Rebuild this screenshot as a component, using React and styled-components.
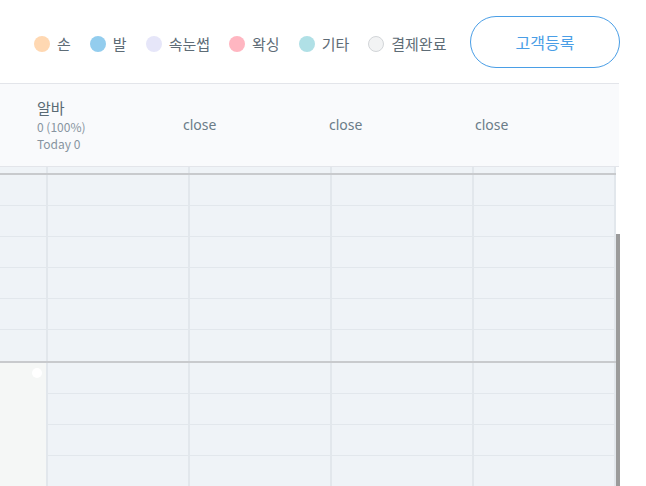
import React from "react";
import styled, { createGlobalStyle } from "styled-components";

const Global = createGlobalStyle`
  html, body { margin: 0; padding: 0; background: #fff; }
  body {
    width: 646px; height: 486px; overflow: hidden;
    font-family: "Noto Sans CJK KR", "Noto Sans", sans-serif;
  }
  * { box-sizing: border-box; }
`;

const Page = styled.div`
  width: 646px;
  height: 486px;
  overflow: hidden;
  display: flex;
  flex-direction: column;
`;

const TopBar = styled.div`
  height: 83px;
  flex: none;
  display: flex;
  align-items: center;
  padding: 0 26px 0 34px;
`;

const Legend = styled.div`
  display: flex;
  align-items: center;
  gap: 19px;
  margin-top: 5px;
`;

const LegendItem = styled.div`
  display: flex;
  align-items: center;
  gap: 7px;
  font-size: 15px;
  color: #5e6c76;
  line-height: 16px;
`;

const Dot = styled.span`
  width: 16px;
  height: 16px;
  border-radius: 50%;
  background: ${(p) => p.$color};
  border: ${(p) => (p.$outline ? "1px solid #d2d5d8" : "none")};
  flex: none;
`;

const RegisterButton = styled.button`
  margin-left: auto;
  width: 150px;
  height: 52px;
  border-radius: 26px;
  border: 1px solid #4a9ee6;
  background: #fff;
  color: #4a9ee6;
  font-family: "Noto Sans CJK KR", sans-serif;
  font-size: 16px;
  cursor: pointer;
`;

const Header = styled.div`
  width: 619px;
  height: 84px;
  flex: none;
  background: #f9fafc;
  border-top: 1px solid #e3e5ea;
  border-bottom: 1px solid #e3e5ea;
  display: grid;
  grid-template-columns: repeat(4, 146px);
  align-items: center;
  padding-left: 37px;
`;

const StaffCell = styled.div`
  display: flex;
  flex-direction: column;
  margin-top: -2px;
`;

const StaffName = styled.div`
  font-size: 15px;
  color: #5a6a74;
  line-height: 21px;
`;

const StaffSub = styled.div`
  font-size: 12px;
  color: #8794a0;
  line-height: 17px;
`;

const Closed = styled.div`
  font-size: 14px;
  color: #6b7c88;
  font-family: "Noto Sans", sans-serif;
  margin-top: -2px;
`;

const Body = styled.div`
  display: flex;
  flex: 1;
  min-height: 0;
`;

const Grid = styled.div`
  width: 616px;
  display: flex;
  flex-direction: column;
`;

const Spacer = styled.div`
  display: grid;
  grid-template-columns: 48px repeat(4, 142px);
  height: 6px;
  flex: none;
`;

const Block = styled.div`
  display: grid;
  grid-template-columns: 48px repeat(4, 142px);
  grid-auto-rows: 31px;
  border-top: 2px solid #c8cacd;
  flex: none;
`;

const Cell = styled.div`
  background: #eff3f7;
  border-right: 2px solid #e2e7ec;
  border-bottom: ${(p) => (p.$noBottom ? "none" : "1px solid #e2e7ec")};
`;

const TimeCell = styled.div`
  grid-row: span 6;
  background: #f5f7f6;
  border-right: 2px solid #e2e7ec;
  position: relative;
`;

const NowDot = styled.span`
  position: absolute;
  top: 5px;
  left: 32px;
  width: 10px;
  height: 10px;
  border-radius: 50%;
  background: #fff;
`;

const ScrollTrack = styled.div`
  width: 4px;
  flex: none;
  padding-top: 67px;
`;

const Thumb = styled.div`
  height: 400px;
  background: #9b9b9b;
`;

const legend = [
  { label: "손", color: "#ffd8b2" },
  { label: "발", color: "#93cdee" },
  { label: "속눈썹", color: "#e6e6f9" },
  { label: "왁싱", color: "#ffb6c1" },
  { label: "기타", color: "#b0e0e6" },
  { label: "결제완료", color: "#f2f3f4", outline: true },
];

const cols = [0, 1, 2, 3, 4];

export default function App() {
  return (
    <Page>
      <Global />
      <TopBar>
        <Legend>
          {legend.map((l) => (
            <LegendItem key={l.label}>
              <Dot $color={l.color} $outline={l.outline} />
              {l.label}
            </LegendItem>
          ))}
        </Legend>
        <RegisterButton>고객등록</RegisterButton>
      </TopBar>
      <Header>
        <StaffCell>
          <StaffName>알바</StaffName>
          <StaffSub>0 (100%)</StaffSub>
          <StaffSub>Today 0</StaffSub>
        </StaffCell>
        <Closed>close</Closed>
        <Closed>close</Closed>
        <Closed>close</Closed>
      </Header>
      <Body>
        <Grid>
          <Spacer>
            {cols.map((c) => (
              <Cell key={c} $noBottom />
            ))}
          </Spacer>
          <Block>
            {Array.from({ length: 6 }).map((_, r) =>
              cols.map((c) => <Cell key={`a${r}-${c}`} $noBottom={r === 5} />)
            )}
          </Block>
          <Block>
            <TimeCell>
              <NowDot />
            </TimeCell>
            {Array.from({ length: 6 }).map((_, r) =>
              cols.slice(1).map((c) => <Cell key={`b${r}-${c}`} />)
            )}
          </Block>
        </Grid>
        <ScrollTrack>
          <Thumb />
        </ScrollTrack>
      </Body>
    </Page>
  );
}
